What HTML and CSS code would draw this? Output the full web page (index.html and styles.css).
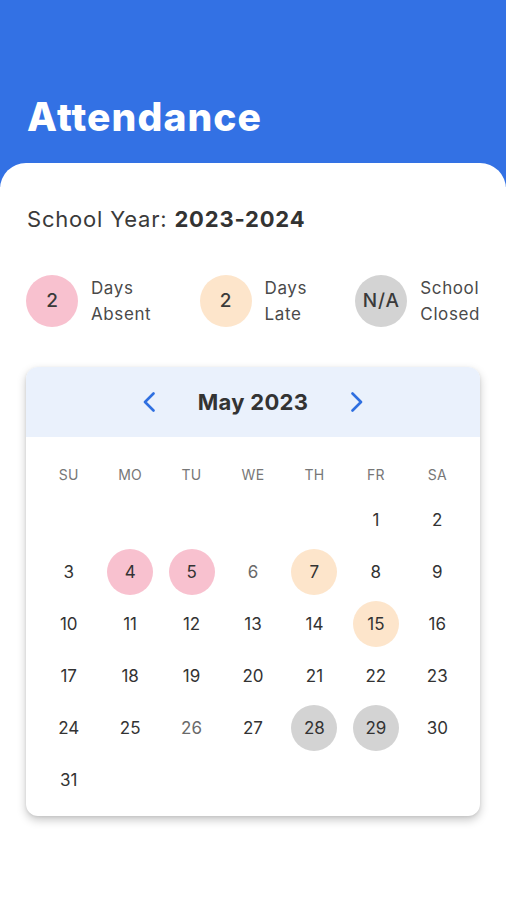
FILE: index.html
```html
<!DOCTYPE html>
<html lang="en">
<head>
<meta charset="utf-8">
<title>Attendance</title>
<link rel="stylesheet" href="styles.css">
</head>
<body>
<header class="top">
  <h1 class="title">Attendance</h1>
</header>
<main class="sheet">
  <p class="year">School Year: <strong>2023-2024</strong></p>
  <div class="legend">
    <div class="legend-item">
      <span class="dot absent">2</span>
      <span class="legend-label">Days<br>Absent</span>
    </div>
    <div class="legend-item">
      <span class="dot late">2</span>
      <span class="legend-label">Days<br>Late</span>
    </div>
    <div class="legend-item">
      <span class="dot closed na">N/A</span>
      <span class="legend-label">School<br>Closed</span>
    </div>
  </div>

  <section class="calendar">
    <div class="cal-head">
      <button class="nav" aria-label="Previous month">
        <svg width="14" height="20" viewBox="0 0 14 20"><polyline points="11.5,1.5 3,10 11.5,18.5" fill="none" stroke="#2f6fe0" stroke-width="2.6" stroke-linecap="round" stroke-linejoin="round"/></svg>
      </button>
      <span class="month">May 2023</span>
      <button class="nav" aria-label="Next month">
        <svg width="14" height="20" viewBox="0 0 14 20"><polyline points="2.5,1.5 11,10 2.5,18.5" fill="none" stroke="#2f6fe0" stroke-width="2.6" stroke-linecap="round" stroke-linejoin="round"/></svg>
      </button>
    </div>
    <div class="cal-body">
      <div class="weekdays">
        <span>SU</span><span>MO</span><span>TU</span><span>WE</span><span>TH</span><span>FR</span><span>SA</span>
      </div>
      <div class="days">
        <span class="day empty"></span><span class="day empty"></span><span class="day empty"></span><span class="day empty"></span><span class="day empty"></span>
        <span class="day"><i>1</i></span><span class="day"><i>2</i></span>
        <span class="day"><i>3</i></span><span class="day"><i class="absent">4</i></span><span class="day"><i class="absent">5</i></span><span class="day"><i class="muted">6</i></span><span class="day"><i class="late">7</i></span><span class="day"><i>8</i></span><span class="day"><i>9</i></span>
        <span class="day"><i>10</i></span><span class="day"><i>11</i></span><span class="day"><i>12</i></span><span class="day"><i>13</i></span><span class="day"><i>14</i></span><span class="day"><i class="late">15</i></span><span class="day"><i>16</i></span>
        <span class="day"><i>17</i></span><span class="day"><i>18</i></span><span class="day"><i>19</i></span><span class="day"><i>20</i></span><span class="day"><i>21</i></span><span class="day"><i>22</i></span><span class="day"><i>23</i></span>
        <span class="day"><i>24</i></span><span class="day"><i>25</i></span><span class="day"><i class="muted">26</i></span><span class="day"><i>27</i></span><span class="day"><i class="closed">28</i></span><span class="day"><i class="closed">29</i></span><span class="day"><i>30</i></span>
        <span class="day"><i>31</i></span>
      </div>
    </div>
  </section>
</main>
</body>
</html>
```

FILE: styles.css
```css
* { box-sizing: border-box; }

html, body {
  margin: 0;
  padding: 0;
  background: #ffffff;
}

body {
  font-family: "Inter", "Open Sans", sans-serif;
  color: #333333;
  width: 506px;
  min-height: 900px;
}

.top {
  background: #3371e4;
  padding: 94px 27px 47px;
}

.title {
  margin: 0;
  color: #ffffff;
  font-size: 39px;
  line-height: 46px;
  font-weight: 800;
  letter-spacing: 1.1px;
}

.sheet {
  background: #ffffff;
  margin-top: -24px;
  border-radius: 26px 26px 0 0;
  padding: 41px 26px 40px;
}

.year {
  margin: 0 0 0 1px;
  font-size: 22px;
  line-height: 30px;
  color: #3a3a3a;
  letter-spacing: 0.8px;
}

.year strong {
  font-weight: 700;
  color: #333333;
}

.legend {
  margin-top: 40px;
  display: flex;
  justify-content: space-between;
  align-items: center;
}

.legend-item {
  display: flex;
  align-items: center;
  gap: 13px;
}

.dot {
  width: 52px;
  height: 52px;
  border-radius: 50%;
  display: flex;
  align-items: center;
  justify-content: center;
  font-size: 19px;
  font-weight: 500;
  color: #3a3a3a;
}

.dot.na { font-size: 19px; letter-spacing: 1px; }

.absent { background: #f8c1cf; }
.late { background: #fde5cb; }
.closed { background: #d3d3d3; }

.legend-label {
  font-size: 17px;
  line-height: 26px;
  color: #4a4a4a;
  padding-top: 1px;
  letter-spacing: 0.6px;
}

.calendar {
  margin-top: 40px;
  border-radius: 12px;
  background: #ffffff;
  box-shadow: 0 4px 10px rgba(0, 0, 0, 0.22), 0 1px 3px rgba(0, 0, 0, 0.08);
  overflow: hidden;
}

.cal-head {
  height: 70px;
  background: #eaf1fc;
  display: flex;
  align-items: center;
  justify-content: center;
  gap: 38px;
}

.nav {
  border: 0;
  background: none;
  padding: 0;
  width: 14px;
  height: 20px;
  display: flex;
  align-items: center;
  justify-content: center;
}

.month {
  font-size: 22px;
  font-weight: 700;
  color: #333333;
  width: 118px;
  text-align: center;
  letter-spacing: 0.3px;
}

.cal-body {
  padding: 17px 12px 10px;
}

.weekdays {
  display: grid;
  grid-template-columns: repeat(7, 1fr);
  height: 40px;
  align-items: center;
  text-align: center;
  font-size: 14px;
  color: #777777;
  letter-spacing: 0.3px;
}

.days {
  display: grid;
  grid-template-columns: repeat(7, 1fr);
  grid-auto-rows: 52px;
}

.day {
  display: flex;
  align-items: center;
  justify-content: center;
}

.day i {
  font-style: normal;
  width: 46px;
  height: 46px;
  border-radius: 50%;
  display: flex;
  align-items: center;
  justify-content: center;
  font-size: 17px;
  color: #333333;
}

.day i.muted { color: #6a6a6a; }
```
